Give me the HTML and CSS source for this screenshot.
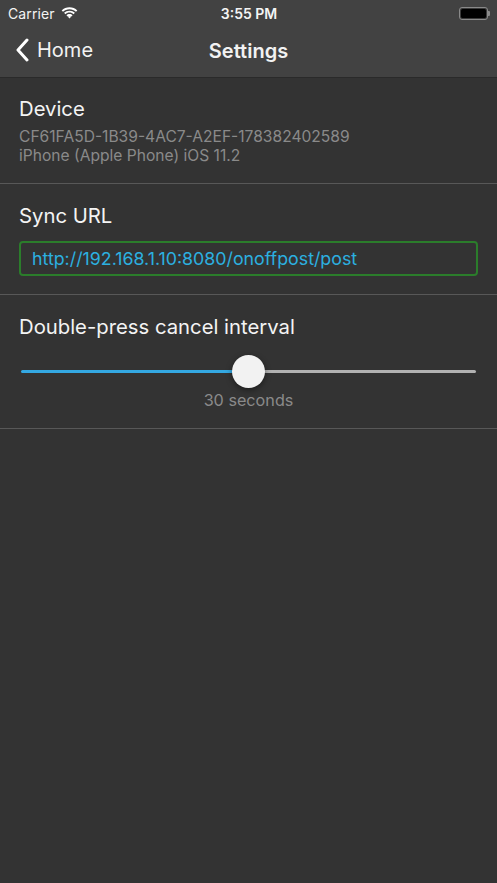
FILE: index.html
```html
<!DOCTYPE html>
<html>
<head>
<meta charset="utf-8">
<link rel="stylesheet" href="styles.css">
</head>
<body>
<div class="screen">
  <header class="topbar">
    <div class="status">
      <div class="status-left">
        <span class="carrier">Carrier</span>
        <svg class="wifi" width="17" height="12" viewBox="0 0 17 12">
          <path d="M8.5 2.2c2.5 0 4.8 1 6.5 2.6l1.3-1.4C14.3 1.4 11.5.2 8.5.2S2.7 1.4.7 3.4L2 4.8c1.7-1.6 4-2.6 6.5-2.6z" fill="#fff"/>
          <path d="M8.5 5.6c1.6 0 3 .6 4.1 1.6l1.3-1.4C12.5 4.5 10.6 3.7 8.5 3.7S4.5 4.5 3.1 5.8l1.3 1.4c1.1-1 2.5-1.6 4.1-1.6z" fill="#fff"/>
          <path d="M8.5 8.9c.7 0 1.3.3 1.8.7l-1.8 1.9-1.8-1.9c.5-.4 1.1-.7 1.8-.7z" fill="#fff"/>
          <path d="M8.5 7.1c1.2 0 2.3.5 3.1 1.2l-1.3 1.3C9.8 9.2 9.2 8.9 8.5 8.9s-1.3.3-1.8.7L5.4 8.3c.8-.7 1.9-1.2 3.1-1.2z" fill="#fff"/>
        </svg>
      </div>
      <div class="time">3:55 PM</div>
      <div class="status-right">
        <div class="battery"><div class="battery-fill"></div></div>
        <div class="battery-tip"></div>
      </div>
    </div>
    <nav class="navbar">
      <div class="back">
        <svg class="chevron" width="14" height="24" viewBox="0 0 14 24">
          <path d="M12 2 L3 12 L12 22" fill="none" stroke="#fff" stroke-width="3" stroke-linecap="round" stroke-linejoin="round"/>
        </svg>
        <span>Home</span>
      </div>
      <div class="title">Settings</div>
    </nav>
  </header>

  <section class="group device">
    <div class="label">Device</div>
    <div class="sub">CF61FA5D-1B39-4AC7-A2EF-178382402589</div>
    <div class="sub">iPhone (Apple Phone) iOS 11.2</div>
  </section>

  <section class="group sync">
    <div class="label">Sync URL</div>
    <div class="url-field">http://192.168.1.10:8080/onoffpost/post</div>
  </section>

  <section class="group interval">
    <div class="label">Double-press cancel interval</div>
    <div class="slider">
      <div class="track-min"></div>
      <div class="thumb"></div>
      <div class="track-max"></div>
    </div>
    <div class="value">30 seconds</div>
  </section>
</div>
</body>
</html>
```

FILE: styles.css
```css
* { box-sizing: border-box; }
html, body { margin: 0; padding: 0; }
body {
  background: #333333;
  font-family: Inter, "Noto Sans", sans-serif;
  color: #f2f2f2;
  width: 497px;
  height: 883px;
  overflow: hidden;
}
.screen { width: 497px; min-height: 883px; background: #333333; }

.topbar {
  background: #424242;
  border-bottom: 1px solid #2a2a2a;
  height: 78px;
}
.status {
  height: 26px;
  display: flex;
  align-items: center;
  justify-content: space-between;
  padding: 0 7px 0 8px;
}
.status-left { display: flex; align-items: center; gap: 6px; width: 120px; }
.carrier { font-size: 14px; color: #f4f4f4; letter-spacing: 0.1px; }
.wifi { margin-top: -1px; }
.time {
  font-size: 14px;
  font-weight: 600;
  color: #f4f4f4;
}
.status-right { display: flex; align-items: center; justify-content: flex-end; width: 120px; }
.battery {
  width: 29px;
  height: 13px;
  border: 1px solid #8a8a8a;
  border-radius: 3px;
  padding: 1px;
  background: #3a3a3a;
}
.battery-fill { width: 100%; height: 100%; background: #000; border-radius: 1.5px; }
.battery-tip { width: 2px; height: 5px; background: #8a8a8a; border-radius: 0 1px 1px 0; }

.navbar {
  height: 51px;
  display: flex;
  align-items: center;
  justify-content: center;
  position: relative;
}
.back {
  position: absolute;
  left: 15px;
  top: 12px;
  display: flex;
  align-items: center;
  gap: 8px;
  font-size: 20px;
  color: #f2f2f2;
}
.chevron { display: block; }
.title {
  font-size: 20px;
  font-weight: 600;
  color: #f2f2f2;
  margin-top: -2px;
}

.group {
  border-bottom: 1px solid #585858;
  padding: 0 19px;
}
.label {
  font-size: 20.3px;
  color: #f4f4f4;
  line-height: 24px;
}
.sub {
  font-size: 15.6px;
  color: #8a8a8a;
  line-height: 18.5px;
}
.device { padding-top: 19px; height: 106px; }
.device .label { margin-bottom: 7px; }

.sync { padding-top: 20px; height: 111px; }
.url-field {
  margin-top: 13px;
  height: 35px;
  border: 2px solid #2b7d2b;
  border-radius: 4px;
  padding: 0 11px;
  display: flex;
  align-items: center;
  font-size: 17.8px;
  color: #2cb0e0;
}

.interval { padding-top: 20px; height: 134px; }
.slider {
  display: flex;
  align-items: center;
  height: 34px;
  margin: 15px 2px 0 2px;
}
.track-min { width: 212px; height: 3px; background: #34a8e2; border-radius: 2px 0 0 2px; }
.track-max { flex: 1; height: 3px; background: #b2b2b2; border-radius: 0 2px 2px 0; }
.thumb {
  width: 33px;
  height: 33px;
  border-radius: 50%;
  background: #f2f2f2;
  box-shadow: 0 2px 6px rgba(0,0,0,0.45);
  margin: 0 -1px;
  position: relative;
  z-index: 1;
}
.value {
  text-align: center;
  font-size: 16.2px;
  color: #8a8a8a;
  margin-top: 2px;
}
```
